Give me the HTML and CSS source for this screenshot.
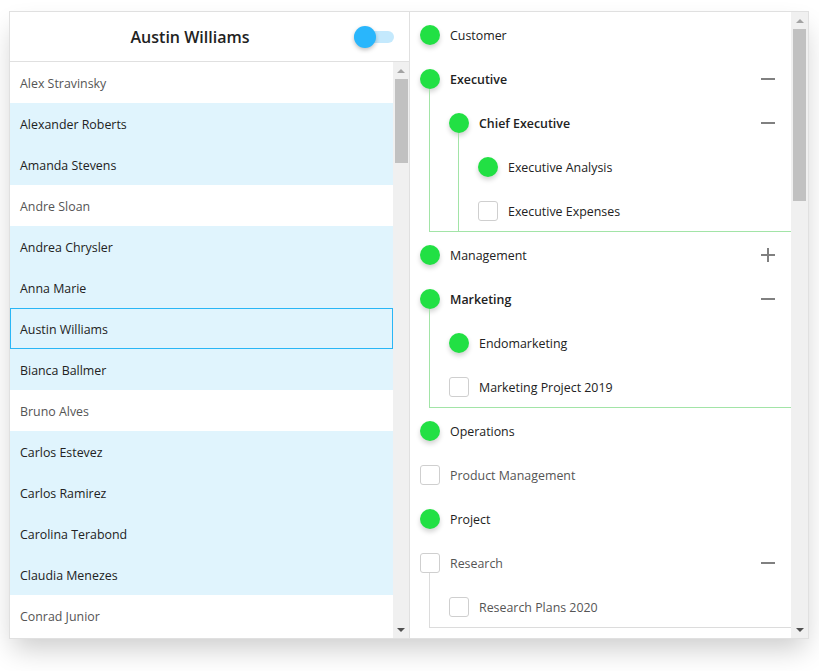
FILE: index.html
```html
<!DOCTYPE html>
<html>
<head>
<meta charset="utf-8">
<link rel="stylesheet" href="styles.css">
</head>
<body>
<div class="page">
<div class="widget">
  <div class="left">
    <div class="header">
      <div class="title">Austin Williams</div>
      <div class="toggle"><span class="track"></span><span class="knob"></span></div>
    </div>
    <div class="list-wrap">
      <div class="list">
        <div class="item">Alex Stravinsky</div>
        <div class="item sel">Alexander Roberts</div>
        <div class="item sel">Amanda Stevens</div>
        <div class="item">Andre Sloan</div>
        <div class="item sel">Andrea Chrysler</div>
        <div class="item sel">Anna Marie</div>
        <div class="item sel focus">Austin Williams</div>
        <div class="item sel">Bianca Ballmer</div>
        <div class="item">Bruno Alves</div>
        <div class="item sel">Carlos Estevez</div>
        <div class="item sel">Carlos Ramirez</div>
        <div class="item sel">Carolina Terabond</div>
        <div class="item sel">Claudia Menezes</div>
        <div class="item">Conrad Junior</div>
      </div>
      <div class="scrollbar sb-left">
        <div class="arrow up"></div>
        <div class="sb-track"><div class="thumb"></div></div>
        <div class="arrow down"></div>
      </div>
    </div>
  </div>
  <div class="right">
    <div class="tree">
      <div class="row l0"><span class="dot"></span><span class="label on">Customer</span></div>

      <div class="row l0 open green"><span class="dot"></span><span class="label on bold">Executive</span><span class="minus"></span></div>
      <div class="kids g0 green">
        <div class="row l1 open green"><span class="dot"></span><span class="label on bold">Chief Executive</span><span class="minus"></span></div>
        <div class="kids g1 green nested">
          <div class="row l2"><span class="dot"></span><span class="label on">Executive Analysis</span></div>
          <div class="row l2 last"><span class="box"></span><span class="label on">Executive Expenses</span></div>
        </div>
      </div>

      <div class="row l0"><span class="dot"></span><span class="label on">Management</span><span class="plus"></span></div>

      <div class="row l0 open green"><span class="dot"></span><span class="label on bold">Marketing</span><span class="minus"></span></div>
      <div class="kids g0 green">
        <div class="row l1"><span class="dot"></span><span class="label on">Endomarketing</span></div>
        <div class="row l1 last"><span class="box"></span><span class="label on">Marketing Project 2019</span></div>
      </div>

      <div class="row l0"><span class="dot"></span><span class="label on">Operations</span></div>
      <div class="row l0"><span class="box"></span><span class="label off">Product Management</span></div>
      <div class="row l0"><span class="dot"></span><span class="label on">Project</span></div>

      <div class="row l0 open gray"><span class="box"></span><span class="label off">Research</span><span class="minus"></span></div>
      <div class="kids g0 gray">
        <div class="row l1 last"><span class="box"></span><span class="label off">Research Plans 2020</span></div>
      </div>
    </div>
    <div class="scrollbar sb-right">
      <div class="arrow up"></div>
      <div class="sb-track"><div class="thumb"></div></div>
      <div class="arrow down"></div>
    </div>
  </div>
</div>
</div>
</body>
</html>
```
FILE: styles.css
```css
html, body {
  margin: 0;
  padding: 0;
  height: 100%;
  background: #ffffff;
}
body {
  font-family: "Open Sans", "Noto Sans", sans-serif;
  color: #222;
}
.page {
  min-height: 671px;
  padding: 11px 0 0 9px;
  box-sizing: border-box;
}
.widget {
  width: 800px;
  height: 628px;
  box-sizing: border-box;
  border: 1px solid #e0e0e0;
  display: flex;
  background: #fff;
  box-shadow: 0 14px 26px -4px rgba(0, 0, 0, 0.2);
  overflow: hidden;
}
.left {
  width: 399px;
  border-right: 1px solid #e0e0e0;
  display: flex;
  flex-direction: column;
}
.header {
  height: 49px;
  border-bottom: 1px solid #e0e0e0;
  display: flex;
  align-items: center;
}
.title {
  flex: 1;
  text-align: center;
  padding-left: 16px;
  font-size: 16px;
  font-weight: 600;
  color: #222;
}
.toggle {
  position: relative;
  width: 40px;
  height: 22px;
  margin-right: 15px;
  margin-top: 1px;
}
.track {
  position: absolute;
  left: 0;
  top: 5px;
  width: 40px;
  height: 12px;
  border-radius: 6px;
  background: #c4e9fd;
}
.knob {
  position: absolute;
  left: 0;
  top: 0;
  width: 22px;
  height: 22px;
  border-radius: 50%;
  background: #29b6fc;
  box-shadow: 0 2px 4px rgba(0, 0, 0, 0.25);
}
.list-wrap {
  flex: 1;
  display: flex;
  min-height: 0;
}
.list {
  flex: 1;
  overflow: hidden;
}
.item {
  height: 41px;
  box-sizing: border-box;
  display: flex;
  align-items: center;
  padding-left: 10px;
  padding-top: 1px;
  font-size: 12.4px;
  color: #555;
}
.item.sel {
  background: #e0f4fd;
  color: #222;
}
.item.focus {
  border: 1px solid #29b6f6;
  padding-left: 9px;
  padding-top: 1px;
}
.scrollbar {
  background: #f0f0f0;
  display: flex;
  flex-direction: column;
  align-items: center;
}
.sb-left {
  width: 16px;
}
.sb-right {
  width: 17px;
}
.arrow {
  height: 17px;
  width: 100%;
  display: flex;
  align-items: center;
  justify-content: center;
}
.arrow::before {
  content: "";
  width: 0;
  height: 0;
  border-left: 4px solid transparent;
  border-right: 4px solid transparent;
}
.arrow.up::before {
  border-bottom: 4px solid #a3a3a3;
}
.arrow.down::before {
  border-top: 4px solid #505050;
}
.sb-track {
  flex: 1;
  width: 100%;
  display: flex;
  justify-content: center;
}
.thumb {
  background: #c1c1c1;
}
.sb-left .thumb {
  width: 13px;
  height: 84px;
}
.sb-right .thumb {
  width: 13px;
  height: 172px;
}
.right {
  flex: 1;
  display: flex;
  min-width: 0;
}
.tree {
  flex: 1;
  padding-top: 1px;
  overflow: hidden;
}
.row {
  position: relative;
  height: 44px;
  box-sizing: border-box;
  display: flex;
  align-items: center;
  padding-right: 16px;
}
.row.last {
  height: 42px;
  padding-top: 2px;
}
.row.l0 { padding-left: 10px; }
.row.l1 { padding-left: 19px; }
.row.l2 { padding-left: 19px; }
.kids {
  border-left: 1px solid #e0e0e0;
  border-bottom: 1px solid #e0e0e0;
  margin-bottom: 1px;
}
.kids.g0 { margin-left: 19px; }
.kids.g1 { margin-left: 28px; }
.kids.nested {
  border-bottom: none;
  margin-bottom: 0;
}
.kids.green { border-color: #a2e4a7; }
.kids.gray { border-color: #dcdcdc; }
.row.open::after {
  content: "";
  position: absolute;
  top: 32px;
  bottom: 0;
  width: 1px;
}
.row.l0.open::after { left: 19px; }
.row.l1.open::after { left: 28px; }
.row.open.green::after { background: #a2e4a7; }
.row.open.gray::after { background: #dcdcdc; }
.dot {
  width: 20px;
  height: 20px;
  border-radius: 50%;
  background: #22e044;
  box-shadow: 0 3px 5px rgba(0, 0, 0, 0.18);
  flex: none;
}
.box {
  width: 20px;
  height: 20px;
  box-sizing: border-box;
  border: 1px solid #cfcfcf;
  border-radius: 3px;
  background: #fff;
  flex: none;
}
.label {
  margin-left: 10px;
  font-size: 12.4px;
  flex: 1;
}
.label.on { color: #222; }
.label.off { color: #555; }
.label.bold { font-weight: 600; }
.minus, .plus {
  position: relative;
  width: 14px;
  height: 14px;
  flex: none;
}
.minus::before, .plus::before, .plus::after {
  content: "";
  position: absolute;
  background: #808080;
}
.minus::before, .plus::before {
  left: 0;
  top: 6px;
  width: 14px;
  height: 2px;
}
.plus::after {
  left: 6px;
  top: 0;
  width: 2px;
  height: 14px;
}
```
